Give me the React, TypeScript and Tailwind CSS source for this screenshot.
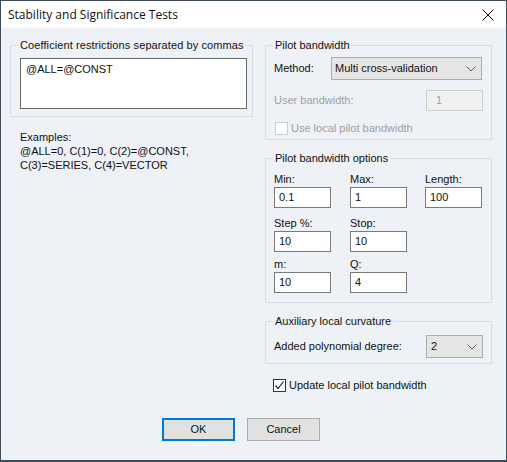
import React from "react";

const Chevron = () => (
  <svg width="10" height="6" viewBox="0 0 10 6" className="shrink-0">
    <path d="M0.5 0.5 L5 5 L9.5 0.5" fill="none" stroke="#606060" strokeWidth="1" />
  </svg>
);

const Box = ({ checked, disabled }: { checked?: boolean; disabled?: boolean }) => (
  <span
    className={`w-[13px] h-[13px] border bg-white flex items-center justify-center shrink-0 ${
      disabled ? "border-[#cccccc]" : "border-[#333333]"
    }`}
  >
    {checked && (
      <svg width="11" height="11" viewBox="0 0 11 11">
        <path d="M1.5 5.5 L4 8.5 L9.5 1.5" fill="none" stroke="#222" strokeWidth="1.2" />
      </svg>
    )}
  </span>
);

const Field = ({ label, value, className = "" }: { label: string; value: string; className?: string }) => (
  <div className={`flex flex-col w-[57px] ${className}`}>
    <span className="h-[13px] mb-[1px]">{label}</span>
    <div className="h-[21px] border border-[#7a7a7a] bg-white flex items-center pl-[4px]">{value}</div>
  </div>
);

export default function App() {
  return (
    <div className="w-[507px] h-[462px] border border-b-2 border-[#3f4b59] bg-[#eef1f5] flex flex-col text-[11px] leading-[13px] text-[#111] font-['Liberation_Sans',Arial,sans-serif]">
      {/* title bar */}
      <div className="h-[27px] bg-white flex items-center justify-between pl-[7px] pr-[12px] shrink-0">
        <span className="text-[12px] leading-[16px] font-['Open_Sans',sans-serif] text-[#111]">Stability and Significance Tests</span>
        <svg width="12" height="12" viewBox="0 0 12 12">
          <path d="M0.5 0.5 L11.5 11.5 M11.5 0.5 L0.5 11.5" stroke="#111" strokeWidth="1" />
        </svg>
      </div>

      <div className="flex pl-[9px] pt-[11px] gap-[12px]">
        {/* left column */}
        <div className="w-[243px] flex flex-col">
          <fieldset className="border border-[#d8dde3] pb-[7px]">
            <legend className="ml-[7px] px-[2px] tracking-[0.1px]">Coefficient restrictions separated by commas</legend>
            <div className="mt-[6px] ml-[9px] w-[227px] h-[51px] border border-[#6b6b6b] bg-white pl-[5px] pt-[4px]">
              @ALL=@CONST
            </div>
          </fieldset>
          <div className="mt-[13px] pl-[10px] leading-[14px]">
            <div>Examples:</div>
            <div>@ALL=0, C(1)=0, C(2)=@CONST,</div>
            <div>C(3)=SERIES, C(4)=VECTOR</div>
          </div>
        </div>

        {/* right column */}
        <div className="w-[227px] flex flex-col">
          <fieldset className="border border-[#d8dde3] px-[8px] pb-[4px]">
            <legend className="ml-[-1px] px-[2px]">Pilot bandwidth</legend>
            <div className="mt-[5px] flex items-center">
              <span className="w-[57px]">Method:</span>
              <div className="w-[151px] h-[23px] border border-[#adadad] bg-[#e5e5e5] flex items-center justify-between pl-[3px] pr-[5px]">
                <span>Multi cross-validation</span>
                <Chevron />
              </div>
            </div>
            <div className="mt-[10px] flex items-center justify-between">
              <span className="text-[#a0a0a0]">User bandwidth:</span>
              <div className="w-[57px] h-[21px] border border-[#cccccc] bg-[#f0f0f0] flex items-center pl-[9px] text-[#a0a0a0]">1</div>
            </div>
            <div className="mt-[11px] flex items-center gap-[3px] pl-[1px]">
              <Box disabled />
              <span className="text-[#a0a0a0]">Use local pilot bandwidth</span>
            </div>
          </fieldset>

          <fieldset className="mt-[12px] border border-[#d8dde3] px-[8px] pb-[9px]">
            <legend className="ml-[-1px] px-[2px]">Pilot bandwidth options</legend>
            <div className="mt-[8px] flex">
              <Field label="Min:" value="0.1" />
              <Field label="Max:" value="1" className="ml-[19px]" />
              <Field label="Length:" value="100" className="ml-[18px]" />
            </div>
            <div className="mt-[9px] flex">
              <Field label="Step %:" value="10" />
              <Field label="Stop:" value="10" className="ml-[19px]" />
            </div>
            <div className="mt-[6px] flex">
              <Field label="m:" value="10" />
              <Field label="Q:" value="4" className="ml-[19px]" />
            </div>
          </fieldset>

          <fieldset className="mt-[12px] border border-[#d8dde3] px-[8px] pb-[5px]">
            <legend className="ml-[-1px] px-[2px]">Auxiliary local curvature</legend>
            <div className="mt-[7px] flex items-center justify-between">
              <span>Added polynomial degree:</span>
              <div className="w-[57px] h-[23px] border border-[#adadad] bg-[#e5e5e5] flex items-center justify-between pl-[4px] pr-[5px]">
                <span>2</span>
                <Chevron />
              </div>
            </div>
          </fieldset>

          <div className="mt-[15px] flex items-center gap-[3px] pl-[8px]">
            <Box checked />
            <span>Update local pilot bandwidth</span>
          </div>
        </div>
      </div>

      <div className="mt-[26px] ml-[161px] flex gap-[12px]">
        <button className="w-[73px] h-[23px] border-2 border-[#0078d7] bg-[#e1e1e1]">OK</button>
        <button className="w-[73px] h-[23px] border border-[#adadad] bg-[#e1e1e1]">Cancel</button>
      </div>
    </div>
  );
}
